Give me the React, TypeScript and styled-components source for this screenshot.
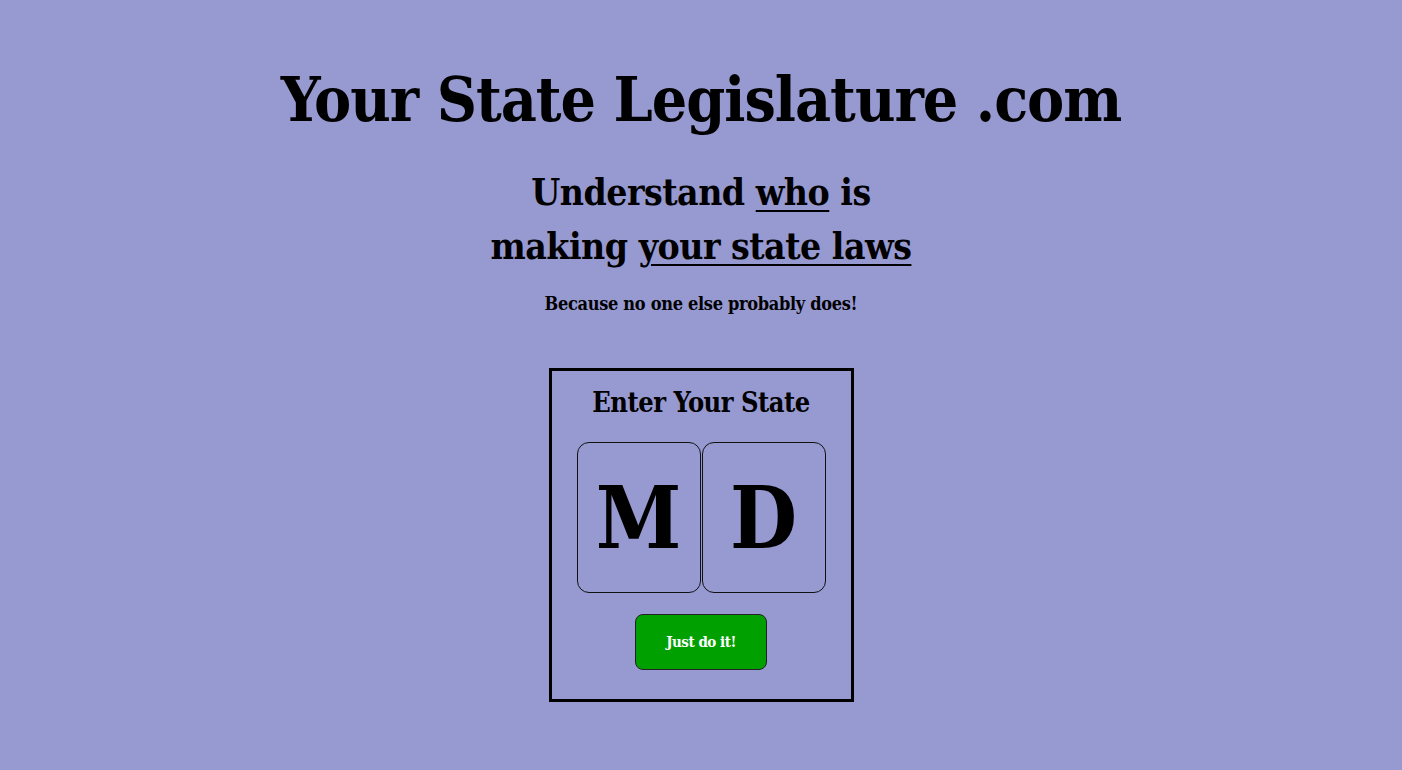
import styled, { createGlobalStyle } from 'styled-components'

const GlobalStyle = createGlobalStyle`
  html, body {
    margin: 0;
    padding: 0;
    background: #9799d1;
  }
  body {
    font-family: "DejaVu Serif", "Liberation Serif", serif;
    font-stretch: condensed;
    color: #000;
  }
`

const Page = styled.main`
  min-height: 770px;
  display: flex;
  flex-direction: column;
  align-items: center;
  padding-top: 60px;
  box-sizing: border-box;
`

const Title = styled.h1`
  margin: 0;
  font-size: 62px;
  line-height: 80px;
  font-weight: bold;
  letter-spacing: -1px;
  text-align: center;
`

const Tagline = styled.h2`
  margin: 25px 0 0;
  font-size: 37px;
  line-height: 54px;
  font-weight: bold;
  letter-spacing: -0.5px;
  text-align: center;
`

const Underlined = styled.span`
  text-decoration: underline;
  text-decoration-thickness: 2px;
  text-underline-offset: 5px;
`

const Aside = styled.p`
  margin: 19px 0 0;
  font-size: 18px;
  line-height: 24px;
  font-weight: bold;
  letter-spacing: -0.3px;
`

const StateCard = styled.form`
  margin-top: 52px;
  width: 305px;
  height: 334px;
  box-sizing: border-box;
  border: 3px solid #000;
  display: flex;
  flex-direction: column;
  align-items: center;
  padding-top: 14px;
`

const CardHeading = styled.h3`
  margin: 0;
  font-size: 27px;
  line-height: 36px;
  font-weight: bold;
  letter-spacing: -0.5px;
`

const LetterRow = styled.div`
  display: flex;
  gap: 1px;
  margin-top: 21px;
`

const LetterBox = styled.div`
  width: 124px;
  height: 151px;
  box-sizing: border-box;
  border: 1px solid #111;
  border-radius: 12px;
  display: flex;
  align-items: center;
  justify-content: center;
  font-size: 86px;
  font-weight: bold;
  line-height: 1;
`

const GoButton = styled.button`
  margin-top: 21px;
  width: 132px;
  height: 56px;
  background: #00a000;
  border: 1px solid #222;
  border-radius: 8px;
  color: #fff;
  font-family: "DejaVu Serif", serif;
  font-stretch: condensed;
  font-weight: bold;
  font-size: 15px;
  letter-spacing: -0.5px;
  cursor: pointer;
`

export default function App() {
  return (
    <>
      <GlobalStyle />
      <Page>
        <Title>Your State Legislature .com</Title>
        <Tagline>
          Understand <Underlined>who</Underlined> is
          <br />
          making <Underlined>your state laws</Underlined>
        </Tagline>
        <Aside>Because no one else probably does!</Aside>
        <StateCard onSubmit={(e) => e.preventDefault()}>
          <CardHeading>Enter Your State</CardHeading>
          <LetterRow>
            <LetterBox>M</LetterBox>
            <LetterBox>D</LetterBox>
          </LetterRow>
          <GoButton type="submit">Just do it!</GoButton>
        </StateCard>
      </Page>
    </>
  )
}
